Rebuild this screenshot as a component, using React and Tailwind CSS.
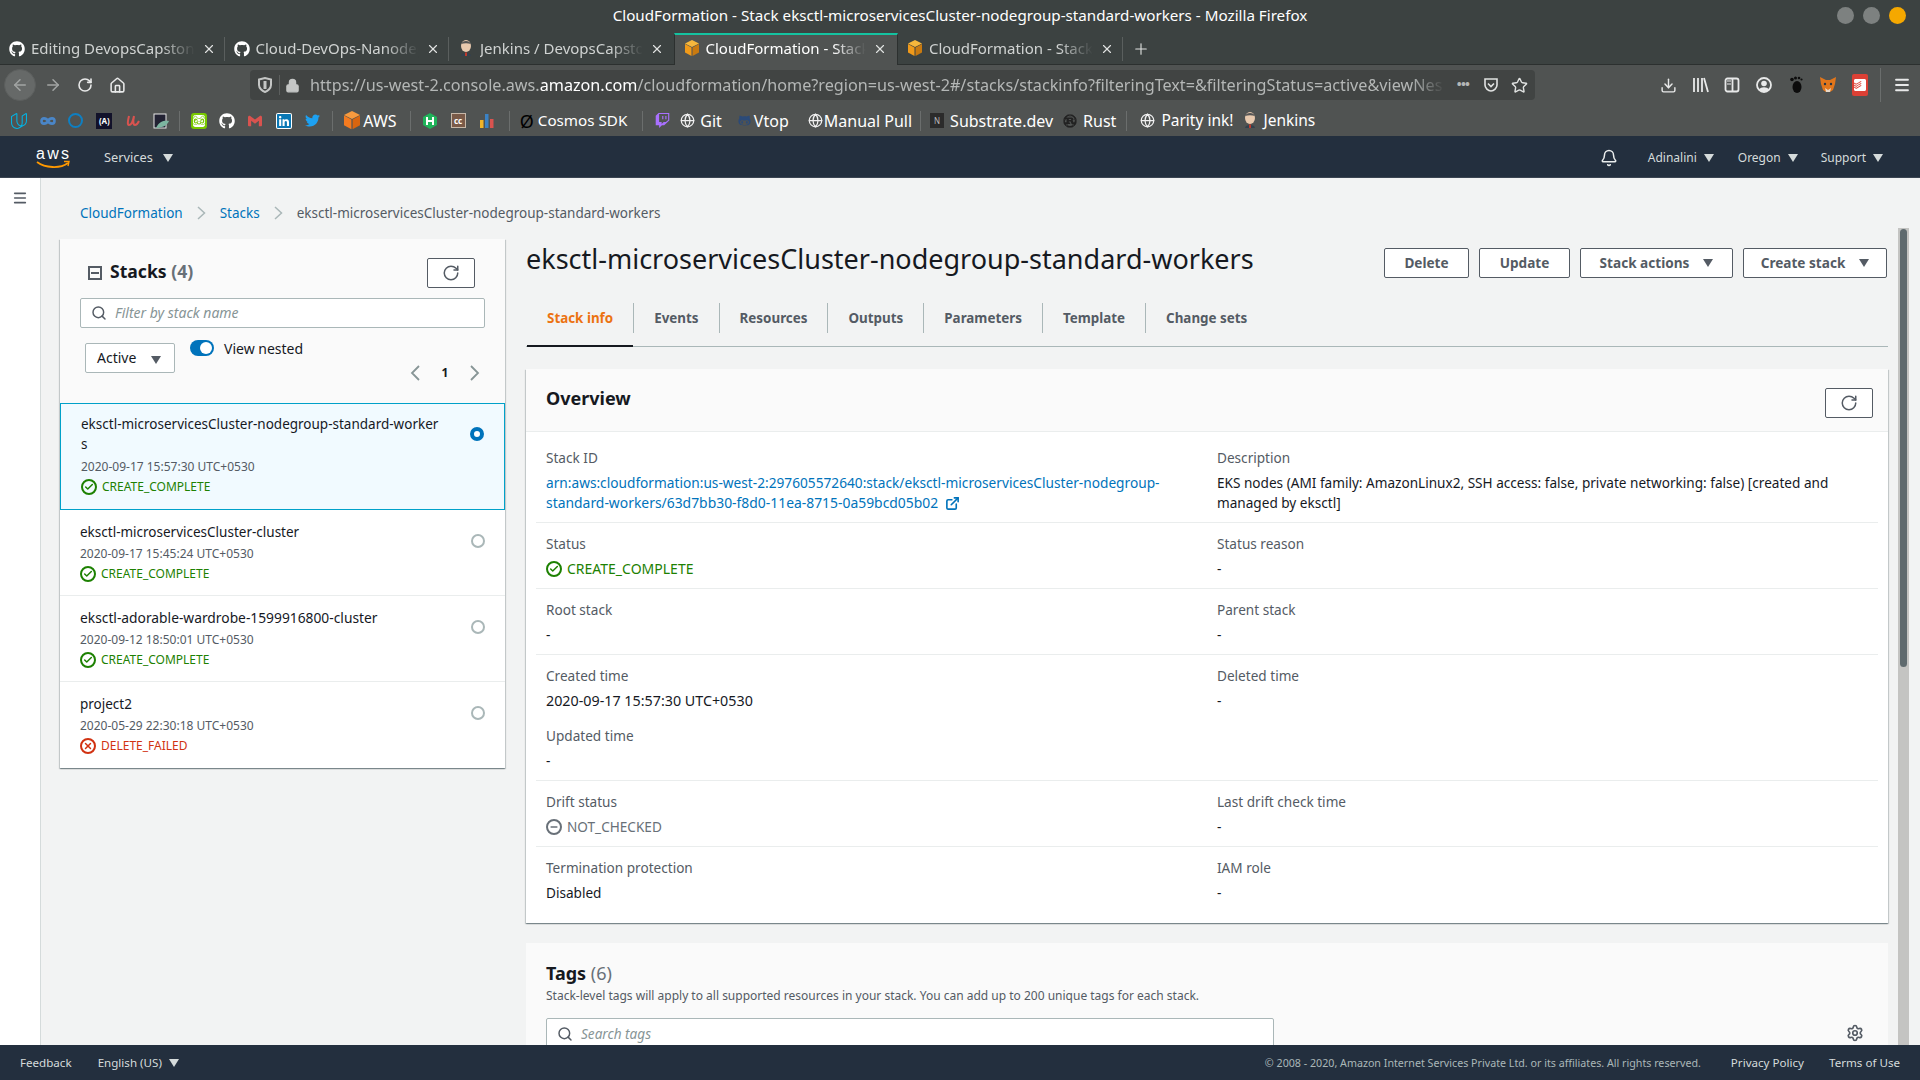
import React from 'react';
import { FaGithub, FaLinkedin, FaTwitter, FaTwitch, FaGithubAlt } from 'react-icons/fa';
import { SiUdacity, SiDuolingo, SiGmail, SiTodoist, SiRust } from 'react-icons/si';
import { X, Plus, ArrowLeft, ArrowRight, RotateCw, Home, Lock, Star, Download, Globe, Menu, Bell, Search, Settings, ExternalLink, Check, Minus } from 'lucide-react';

const Tri = ({ c = 'border-t-[#d5dbdb]' }) => (
  <span className={`inline-block w-0 h-0 border-l-[5px] border-r-[5px] border-t-[8px] border-l-transparent border-r-transparent ${c}`} />
);

const Cube = ({ s = 14, top = '#f6b73c', l = '#f09a1a', r = '#c97a10' }) => (
  <svg width={s} height={s * 1.15} viewBox="0 0 14 16">
    <path d="M7 0 14 3.5 7 7 0 3.5Z" fill={top} />
    <path d="M0 4 6.5 7.5V16L0 12.5Z" fill={l} />
    <path d="M14 4 7.5 7.5V16L14 12.5Z" fill={r} />
  </svg>
);

const JenkinsFace = () => (
  <svg width="14" height="17" viewBox="0 0 14 17">
    <ellipse cx="7" cy="6" rx="5" ry="6" fill="#e8c9ae" />
    <path d="M2 4C3 0 11 0 12 4 9 3 5 3 2 4Z" fill="#555" />
    <path d="M2 16C2 12 12 12 12 16Z" fill="#33414f" />
    <path d="M6 12.500 8 12.500 8 16 6 16Z" fill="#c0392b" />
  </svg>
);

const tabs = [
  { t: 'Editing DevopsCapstone', i: <FaGithub size={16} className="text-white" /> },
  { t: 'Cloud-DevOps-Nanodegree', i: <FaGithub size={16} className="text-white" /> },
  { t: 'Jenkins / DevopsCapstone', i: <JenkinsFace /> },
  { t: 'CloudFormation - Stack', i: <Cube />, active: true },
  { t: 'CloudFormation - Stack', i: <Cube /> },
];

function TabBar() {
  return (
    <div className="h-[32px] flex items-stretch bg-[#3c4241] border-b border-[#2c302f] text-[15px]">
      {tabs.map((tb, i) => (
        <div key={i} className={`w-[224.5px] shrink-0 flex items-center pl-[9px] pr-[10px] ${tb.active ? 'bg-[#505352] border-t-2 border-[#14c2a0] border-x border-x-[#2c302f] h-[32px] pb-[3px]' : ''}`}>
          <span className="w-[16px] flex justify-center shrink-0">{tb.i}</span>
          <span className={`ml-[6px] flex-1 overflow-hidden whitespace-nowrap [mask-image:linear-gradient(90deg,#000_78%,transparent_98%)] ${tb.active ? 'text-white' : 'text-[#d0d3d2]'}`}>{tb.t}</span>
          <X size={14} className="text-[#e0e2e1] shrink-0 ml-1" />
          {!tb.active && i !== 2 && <span className="ml-[8px] -mr-[10px] w-px h-[24px] bg-[#5a5f5e]" />}
        </div>
      ))}
      <div className="flex items-center">
        <span className="w-[36px] flex justify-center"><Plus size={18} strokeWidth={1.5} className="text-[#e0e2e1]" /></span>
      </div>
    </div>
  );
}

function Toolbar() {
  return (
    <div className="h-[40px] bg-[#505352] flex items-center text-[#e8e9e9]">
      <span className="ml-[4px] w-[32px] h-[32px] rounded-full bg-[#666968] border border-[#5c5f5e] flex items-center justify-center"><ArrowLeft size={18} className="text-[#a2a5a4]" /></span>
      <span className="w-[34px] flex justify-center"><ArrowRight size={18} className="text-[#a2a5a4]" /></span>
      <span className="w-[30px] flex justify-center"><RotateCw size={16} strokeWidth={2.4} /></span>
      <span className="w-[34px] flex justify-center"><Home size={17} strokeWidth={2.2} /></span>
      <div className="ml-[116px] w-[1285px] h-[30px] bg-[#414443] rounded-[4px] flex items-center text-[16.200px] text-[#b4b7b6]">
        <svg className="ml-[8px]" width="14" height="16" viewBox="0 0 14 16" fill="none" stroke="#c4c6c5" strokeWidth="2"><path d="M1 2.500 7 1 13 2.500V8C13 11 10 14 7 15 4 14 1 11 1 8Z" /><path d="M7 4V12" strokeWidth="3" /></svg>
        <span className="ml-[7px] w-px h-[20px] bg-[#5c5f5e]" />
        <Lock size={15} fill="#c4c6c5" className="ml-[5px] text-[#c4c6c5] shrink-0" />
        <div className="ml-[10px] w-[1135px] overflow-hidden whitespace-nowrap [mask-image:linear-gradient(90deg,#000_97%,transparent)]">
          https://us-west-2.console.aws.<span className="text-white">amazon.com</span>/cloudformation/home?region=us-west-2#/stacks/stackinfo?filteringText=&filteringStatus=active&viewNes
        </div>
        <span className="ml-[9px] w-[18px] text-center text-[13px] font-bold tracking-tighter">•••</span>
        <svg className="ml-[11px]" width="16" height="16" viewBox="0 0 16 16" fill="none" stroke="#e0e2e1" strokeWidth="1.600"><path d="M2 2H14V8C14 11 11 14 8 14 5 14 2 11 2 8Z" /><path d="M5 6.500 8 9.500 11 6.500" /></svg>
        <Star size={17} className="ml-[12px] text-[#e0e2e1]" />
      </div>
      <div className="flex items-center ml-[117px]">
        <span className="w-[32px] flex justify-center"><Download size={17} /></span>
        <span className="w-[32px] flex justify-center">
          <svg width="17" height="16" viewBox="0 0 17 16" stroke="#e8e9e9" strokeWidth="1.800" fill="none"><path d="M2 1V15M6 1V15M10 1V15M12 1 16 15" /></svg>
        </span>
        <span className="w-[32px] flex justify-center">
          <svg width="16" height="16" viewBox="0 0 16 16" stroke="#e8e9e9" strokeWidth="1.800" fill="none"><rect x="1.500" y="1.500" width="13" height="13" rx="2" /><path d="M8.500 2V14" /><path d="M3 4H7M3 7H7" strokeWidth="1.200" /></svg>
        </span>
        <span className="w-[32px] flex justify-center">
          <svg width="16" height="16" viewBox="0 0 16 16"><circle cx="8" cy="8" r="7" fill="none" stroke="#e8e9e9" strokeWidth="1.800" /><circle cx="8" cy="6.500" r="2.800" fill="#e8e9e9" /><path d="M3 12.500C5 9.500 11 9.500 13 12.500 11 15 5 15 3 12.500Z" fill="#e8e9e9" /></svg>
        </span>
        <span className="w-[32px] flex justify-center">
          <svg width="14" height="18" viewBox="0 0 14 18" fill="#0c0c0c"><ellipse cx="8" cy="11" rx="4.500" ry="6" /><circle cx="3" cy="3.500" r="1.800" /><circle cx="6.500" cy="2" r="1.500" /><circle cx="10" cy="2" r="1.300" /><circle cx="12.500" cy="3.500" r="1.100" /></svg>
        </span>
        <span className="w-[32px] flex justify-center">
          <svg width="18" height="18" viewBox="0 0 18 18"><path d="M1 1 7 4H11L17 1 16 8 14 14 11 16H7L4 14 2 8Z" fill="#e2761b" /><path d="M6 12 9 14 12 12 11 16H7Z" fill="#e8d8c8" /><circle cx="6" cy="8" r="1.200" fill="#233447" /><circle cx="12" cy="8" r="1.200" fill="#233447" /></svg>
        </span>
        <span className="w-[32px] flex justify-center"><span className="w-[16px] h-[22px] bg-[#db4035] rounded-[2px] flex items-center justify-center"><SiTodoist size={12} className="text-white" /></span></span>
        <span className="ml-[4px] w-px h-[34px] bg-[#6b6e6d]" />
        <span className="ml-[11px] w-[20px] flex justify-center"><Menu size={18} strokeWidth={2.400} /></span>
      </div>
    </div>
  );
}

const BmSep = ({ ml = 'ml-[9px]' }) => <span className={`${ml} w-px h-[20px] bg-[#6b6e6d] shrink-0`} />;
const BmI = ({ children }) => <span className="w-[28.400px] h-[20px] shrink-0 flex items-center justify-center">{children}</span>;

function Bookmarks() {
  const G = <Globe size={15} className="text-[#f0f0f0]" />;
  return (
    <div className="h-[31px] bg-[#505352] flex items-center text-white text-[16px] whitespace-nowrap pl-[5px]">
      <BmI><SiUdacity size={16} className="text-[#02b3e4]" /></BmI>
      <BmI><svg width="16" height="10" viewBox="0 0 16 10" fill="none" stroke="#4a86c8" strokeWidth="2.600"><path d="M8 5C6 1.500 1.500 1.500 1.500 5S6 8.500 8 5C10 1.500 14.500 1.500 14.500 5S10 8.500 8 5Z" /></svg></BmI>
      <BmI><span className="block w-[15px] h-[15px] rounded-full border-[2.500px] border-[#0e7fc2]" /></BmI>
      <BmI><span className="w-[16px] h-[16px] bg-[#12122a] flex items-center justify-center text-[8px] leading-none text-white font-bold">(A)</span></BmI>
      <BmI><svg width="14" height="12" viewBox="0 0 14 12" fill="none" stroke="#d9534f" strokeWidth="2"><path d="M3 1C2 5 1 10 3 10 5 10 7 6 8 1 7 6 7 10 9 10 11 10 12 8 13 6" /></svg></BmI>
      <BmI><svg width="16" height="16" viewBox="0 0 16 16"><rect x="1" y="1" width="12" height="14" fill="#223" stroke="#e8e8e8" /><path d="M3 15C6 8 12 7 16 8 14 13 8 15 3 15Z" fill="#7cb5a0" /></svg></BmI>
      <BmSep ml="ml-[4px]" />
      <span className="ml-[4px]" />
      <BmI><span className="w-[16px] h-[16px] rounded-[3px] bg-[#78c800] flex items-center justify-center"><SiDuolingo size={12} className="text-white" /></span></BmI>
      <BmI><FaGithub size={16} className="text-white" /></BmI>
      <BmI><SiGmail size={14} className="text-[#d9534f]" /></BmI>
      <BmI><FaLinkedin size={16} className="text-[#0a78b5] bg-white rounded-[2px]" /></BmI>
      <BmI><FaTwitter size={15} className="text-[#1da1f2]" /></BmI>
      <BmSep ml="ml-[6px]" />
      <span className="ml-[11px] w-[16px] flex justify-center"><Cube s={16} top="#f79a3e" l="#f47b20" r="#d9650f" /></span>
      <span className="ml-[3px]">AWS</span>
      <BmSep ml="ml-[13px]" />
      <span className="ml-[5px]" />
      <BmI><svg width="14" height="16" viewBox="0 0 14 16"><path d="M7 0 14 4V12L7 16 0 12V4Z" fill="#1fb35a" /><path d="M4 4V12M10 4V12M4 8H10" stroke="#fff" strokeWidth="2" /></svg></BmI>
      <BmI><span className="w-[15px] h-[15px] bg-[#7a5a48] text-white text-[8px] font-bold flex items-center justify-center border border-[#c8b8a8]">cc</span></BmI>
      <BmI><svg width="14" height="14" viewBox="0 0 14 14"><rect y="6" width="3.500" height="8" fill="#f0b429" /><rect x="5" y="0" width="3.500" height="14" fill="#3b82c4" /><rect x="10" y="5" width="3.500" height="9" fill="#d9534f" /></svg></BmI>
      <BmSep ml="ml-[8px]" />
      <span className="ml-[10px] text-[18px] text-black leading-none">Ø</span>
      <span className="ml-[4px] text-[15.200px]">Cosmos SDK</span>
      <BmSep ml="ml-[15px]" />
      <span className="ml-[11px] w-[16px] flex justify-center"><FaTwitch size={15} className="text-[#a970ff]" /></span>
      <span className="ml-[10px]">{G}</span>
      <span className="ml-[5px]">Git</span>
      <span className="ml-[16px] w-[14px] flex justify-center"><FaGithubAlt size={13} className="text-[#2b4a78]" /></span>
      <span className="ml-[2px]">Vtop</span>
      <span className="ml-[19px]">{G}</span>
      <span className="ml-[1px]">Manual Pull</span>
      <BmSep ml="ml-[8px]" />
      <span className="ml-[9px] w-[14px] h-[15px] bg-[#2b2b2b] flex items-center justify-center text-[8px] text-[#bbb]">N</span>
      <span className="ml-[6px]">Substrate.dev</span>
      <span className="ml-[10px]"><SiRust size={14} className="text-[#222]" /></span>
      <span className="ml-[6px]">Rust</span>
      <BmSep ml="ml-[10px]" />
      <span className="ml-[13px]">{G}</span>
      <span className="ml-[6px] text-[15.500px]">Parity ink!</span>
      <span className="ml-[10px]"><JenkinsFace /></span>
      <span className="ml-[6px] text-[15.500px]">Jenkins</span>
    </div>
  );
}

function AwsNav() {
  const Item = ({ t, cls }) => (
    <span className={`flex items-center gap-[7px] ${cls}`}>{t}<Tri /></span>
  );
  return (
    <div className="h-[42px] bg-[#232f3e] border-b border-[#3b4552] flex items-center pt-[2px] text-[12px] text-[#d5dbdb]">
      <svg className="ml-[36px] shrink-0" width="34" height="24" viewBox="0 0 34 24">
        <text x="0" y="13" fontSize="16" fill="#fff" fontFamily="Liberation Sans" textLength="33">aws</text>
        <path d="M1 16C9 22 24 23 32 17" fill="none" stroke="#f90" strokeWidth="1.800" />
        <path d="M28 15.500 33 15.500 32 20" fill="none" stroke="#f90" strokeWidth="1.400" />
      </svg>
      <Item t="Services" cls="ml-[34px] text-[12.800px] gap-[10px]" />
      <Bell size={18} className="ml-auto text-[#eaeded]" />
      <Item t="Adinalini" cls="ml-[30px]" />
      <Item t="Oregon" cls="ml-[24px]" />
      <Item t="Support" cls="ml-[23px] mr-[37px]" />
    </div>
  );
}

const OutBtn = ({ children, cls = '' }) => (
  <button className={`h-[30px] border border-[#545b64] rounded-[2px] bg-white flex items-center justify-center font-bold text-[#545b64] text-[13.600px] ${cls}`}>{children}</button>
);

const RefreshBtn = ({ cls = '' }) => (
  <button className={`h-[30px] border border-[#545b64] rounded-[2px] bg-white flex items-center justify-center ${cls}`}>
    <RotateCw size={18} strokeWidth={2} className="text-[#545b64]" />
  </button>
);

const StatusOk = ({ size = 'text-[12px]' }) => (
  <span className={`flex items-center gap-[5px] text-[#1d8102] ${size}`}>
    <span className="w-[16px] h-[16px] rounded-full border-2 border-[#1d8102] flex items-center justify-center"><Check size={10} strokeWidth={3.500} /></span>
    CREATE_COMPLETE
  </span>
);

const StatusFail = () => (
  <span className="flex items-center gap-[5px] text-[#d13212] text-[12px]">
    <span className="w-[16px] h-[16px] rounded-full border-2 border-[#d13212] flex items-center justify-center"><X size={10} strokeWidth={3.500} /></span>
    DELETE_FAILED
  </span>
);

const stacks = [
  { n: 'eksctl-microservicesCluster-cluster', z: 'text-[13.500px]', d: '2020-09-17 15:45:24 UTC+0530', s: <StatusOk /> },
  { n: 'eksctl-adorable-wardrobe-1599916800-cluster', z: 'text-[13.800px]', d: '2020-09-12 18:50:01 UTC+0530', s: <StatusOk /> },
  { n: 'project2', z: 'text-[13.500px]', d: '2020-05-29 22:30:18 UTC+0530', s: <StatusFail /> },
];

function StacksPanel() {
  return (
    <div className="w-[445px] h-[529px] shrink-0 bg-white shadow-[0_1px_1px_0_rgba(0,28,36,0.3),1px_1px_1px_0_rgba(0,28,36,0.15),-1px_1px_1px_0_rgba(0,28,36,0.15)]">
      <div className="h-[164px] bg-[#fafafa] pl-[20px] pr-[20px]">
        <div className="flex items-center pt-[19px] h-[49px]">
          <span className="ml-[8px] w-[14px] h-[14px] border-2 border-[#545b64] flex items-center justify-center"><span className="block w-[8px] h-[2px] bg-[#545b64]" /></span>
          <span className="ml-[8px] -mt-[3px] text-[17.600px] font-bold text-[#16191f]">Stacks <span className="text-[#687078] font-bold">(4)</span></span>
          <RefreshBtn cls="ml-auto mr-[10px] w-[48px]" />
        </div>
        <div className="mt-[10px] h-[30px] w-[405px] border border-[#aab7b8] rounded-[2px] bg-white flex items-center pl-[10px]">
          <Search size={16} strokeWidth={2.200} className="text-[#545b64]" />
          <span className="ml-[8px] italic text-[14px] -mt-[1px] text-[#879596]">Filter by stack name</span>
        </div>
        <div className="flex mt-[12px] pl-[5px]">
          <div className="mt-[3px] w-[90px] h-[30px] border border-[#aab7b8] rounded-[2px] bg-white flex items-center pl-[11px] text-[14px] text-[#16191f]">
            <span className="-mt-[1px]">Active</span><span className="ml-auto mr-[13px]"><Tri c="border-t-[#545b64]" /></span>
          </div>
          <div className="ml-[15px] flex flex-col flex-1">
            <div className="flex items-center h-[16px]">
              <span className="w-[24px] h-[16px] rounded-full bg-[#0073bb] flex items-center justify-end pr-[2px]"><span className="w-[12px] h-[12px] rounded-full bg-white" /></span>
              <span className="ml-[10px] text-[14px] text-[#16191f]">View nested</span>
            </div>
            <div className="mt-[8px] flex items-center justify-end gap-[20px] pr-[5px] text-[#16191f] text-[12px] font-bold">
              <svg width="10" height="16" viewBox="0 0 10 16" fill="none" stroke="#879596" strokeWidth="1.800"><path d="M9 1 2 8 9 15" /></svg>
              <span className="w-[10px] text-center">1</span>
              <svg width="10" height="16" viewBox="0 0 10 16" fill="none" stroke="#879596" strokeWidth="1.800"><path d="M1 1 8 8 1 15" /></svg>
            </div>
          </div>
        </div>
      </div>
      <div className="h-[107px] bg-[#f1faff] border border-[#00a1c9] pl-[20px] pr-[20px] pt-[10px] flex">
        <div className="w-[360px]">
          <div className="text-[13.500px] leading-[20px] text-[#16191f] break-all">eksctl-microservicesCluster-nodegroup-standard-workers</div>
          <div className="mt-[5px] text-[12px] leading-[16px] text-[#545b64]">2020-09-17 15:57:30 UTC+0530</div>
          <div className="mt-[3px]"><StatusOk /></div>
        </div>
        <span className="ml-[29px] mt-[13px] w-[14px] h-[14px] rounded-full border-[4px] border-[#0073bb] bg-white shrink-0" />
      </div>
      {stacks.map((s, i) => (
        <div key={i} className={`h-[86px] pl-[20px] pr-[20px] pt-[12px] flex ${i < 2 ? 'border-b border-[#eaeded]' : ''}`}>
          <div className="w-[360px]">
            <div className={`${s.z} leading-[20px] text-[#16191f]`}>{s.n}</div>
            <div className="mt-[4px] text-[12px] leading-[16px] text-[#545b64]">{s.d}</div>
            <div className="mt-[3px]">{s.s}</div>
          </div>
          <span className="ml-[31px] mt-[12px] w-[14px] h-[14px] rounded-full border-2 border-[#aab7b8] shrink-0" />
        </div>
      ))}
    </div>
  );
}

const Field = ({ label, children }) => (
  <div>
    <div className="text-[13.600px] leading-[20px] text-[#545b64]">{label}</div>
    <div className="mt-[5px] text-[13.600px] leading-[20px] text-[#16191f]">{children}</div>
  </div>
);

const Row = ({ left, right, h, pad = 'pt-[11px]', border = true }) => (
  <div className={`mx-[10px] pl-[10px] ${pad} grid grid-cols-[671px_1fr] ${border ? 'border-b border-[#eaeded]' : ''}`} style={{ height: h }}>
    <div>{left}</div>
    <div>{right}</div>
  </div>
);

function Details() {
  const tabNames = ['Stack info', 'Events', 'Resources', 'Outputs', 'Parameters', 'Template', 'Change sets'];
  return (
    <div className="w-[1362px] shrink-0">
      <div className="h-[58px] flex items-start pt-[9px]">
        <h1 className="text-[27px] leading-[36px] -mt-[7px] text-[#16191f] font-normal">eksctl-microservicesCluster-nodegroup-standard-workers</h1>
        <div className="ml-auto flex gap-[10px] pr-[1px]">
          <OutBtn cls="w-[85px]">Delete</OutBtn>
          <OutBtn cls="w-[91px]">Update</OutBtn>
          <OutBtn cls="w-[153px] gap-[14px]">Stack actions<Tri c="border-t-[#545b64]" /></OutBtn>
          <OutBtn cls="w-[144px] gap-[14px]">Create stack<Tri c="border-t-[#545b64]" /></OutBtn>
        </div>
      </div>
      <div className="h-[50px] border-b-[1px] border-[#aab7b8] flex items-start pt-[6px]">
        {tabNames.map((t, i) => (
          <div key={t} className={`relative h-[30px] flex items-center px-[20px] pt-[1px] text-[13.400px] font-bold ${i === 0 ? 'text-[#ec7211] ml-px' : 'text-[#545b64]'} ${i < 6 ? 'border-r border-[#aab7b8]' : ''}`}>
            {t}
            {i === 0 && <span className="absolute left-0 right-0 top-[42px] h-[2px] bg-[#16191f]" />}
          </div>
        ))}
      </div>
      <div className="mt-[22px] h-[554px] bg-white shadow-[0_1px_1px_0_rgba(0,28,36,0.3),1px_1px_1px_0_rgba(0,28,36,0.15),-1px_1px_1px_0_rgba(0,28,36,0.15)]">
        <div className="h-[63px] bg-[#fafafa] border-b border-[#eaeded] flex items-start pl-[20px] pr-[15px] pt-[19px]">
          <h2 className="text-[18px] leading-[22px] -mt-[1px] font-bold text-[#16191f]">Overview</h2>
          <RefreshBtn cls="ml-auto w-[48px]" />
        </div>
        <Row h="91px" pad="pt-[16px]" left={
          <Field label="Stack ID">
            <span className="text-[#0073bb] text-[13.700px]">arn:aws:cloudformation:us-west-2:297605572640:stack/eksctl-microservicesCluster-nodegroup-<br /><span className="text-[13.900px]">standard-workers/63d7bb30-f8d0-11ea-8715-0a59bcd05b02</span> <ExternalLink size={15} strokeWidth={2.600} className="inline ml-[3px] -mt-[2px]" /></span>
          </Field>
        } right={
          <Field label="Description">EKS nodes (AMI family: AmazonLinux2, SSH access: false, private networking: false) [created and<br />managed by eksctl]</Field>
        } />
        <Row h="66px" left={<Field label="Status"><StatusOk size="text-[14px]" /></Field>} right={<Field label="Status reason">-</Field>} />
        <Row h="66px" left={<Field label="Root stack">-</Field>} right={<Field label="Parent stack">-</Field>} />
        <Row h="126px" left={
          <div>
            <Field label="Created time"><span className="text-[14.300px]">2020-09-17 15:57:30 UTC+0530</span></Field>
            <div className="mt-[15px]"><Field label="Updated time">-</Field></div>
          </div>
        } right={<Field label="Deleted time">-</Field>} />
        <Row h="66px" left={
          <Field label="Drift status">
            <span className="flex items-center gap-[5px] text-[#687078]">
              <span className="w-[16px] h-[16px] rounded-full border-2 border-[#687078] flex items-center justify-center"><Minus size={10} strokeWidth={3.500} /></span>
              NOT_CHECKED
            </span>
          </Field>
        } right={<Field label="Last drift check time">-</Field>} />
        <Row h="76px" border={false} left={<Field label="Termination protection">Disabled</Field>} right={<Field label="IAM role">-</Field>} />
      </div>
      <div className="mt-[20px] h-[120px] bg-[#fafafa] pl-[20px] pr-[24px] pt-[18px]">
        <div className="text-[18px] leading-[24px] font-bold text-[#16191f]">Tags <span className="font-normal text-[#687078]">(6)</span></div>
        <div className="text-[12px] leading-[16px] text-[#545b64] mt-[3px]">Stack-level tags will apply to all supported resources in your stack. You can add up to 200 unique tags for each stack.</div>
        <div className="mt-[14px] flex items-start">
          <div className="w-[728px] h-[40px] border border-[#aab7b8] rounded-[2px] bg-white flex items-start pl-[10px] pt-[5px]">
            <Search size={16} strokeWidth={2.200} className="text-[#545b64] mt-[2px]" />
            <span className="ml-[8px] italic text-[13.600px] text-[#879596]">Search tags</span>
          </div>
          <Settings size={18} strokeWidth={2.200} className="ml-auto mt-[6px] text-[#545b64]" />
        </div>
      </div>
    </div>
  );
}

function Footer() {
  return (
    <div className="h-[35px] shrink-0 bg-[#232f3e] flex items-center pl-[20px] pr-[20px] pt-[1px] text-[11.600px] text-[#d5dbdb] relative z-10">
      <span>Feedback</span>
      <span className="ml-[26px] flex items-center gap-[7px]">English (US)<Tri /></span>
      <span className="ml-auto text-[10.700px] text-[#aab7b8]">© 2008 - 2020, Amazon Internet Services Private Ltd. or its affiliates. All rights reserved.</span>
      <span className="ml-[30px]">Privacy Policy</span>
      <span className="ml-[25px]">Terms of Use</span>
    </div>
  );
}

export default function App() {
  return (
    <div className="w-[1920px] h-[1080px] overflow-hidden flex flex-col font-['Noto_Sans',sans-serif] bg-[#f2f3f3]">
      <div className="h-[33px] shrink-0 bg-[#3c4241] flex items-center justify-center pb-[2px] relative text-[15.200px] text-white">
        CloudFormation - Stack eksctl-microservicesCluster-nodegroup-standard-workers - Mozilla Firefox
        <div className="absolute right-[14px] top-[7px] flex gap-[9px]">
          <span className="w-[17px] h-[17px] rounded-full bg-[#7d8180]" />
          <span className="w-[17px] h-[17px] rounded-full bg-[#7d8180]" />
          <span className="w-[17px] h-[17px] rounded-full bg-[#f5a800]" />
        </div>
      </div>
      <TabBar />
      <Toolbar />
      <Bookmarks />
      <AwsNav />
      <div className="flex-1 flex min-h-0 overflow-hidden">
        <div className="w-[41px] shrink-0 bg-white border-r border-[#d5dbdb] pt-[12px] pl-[12px]">
          <Menu size={16} strokeWidth={2.400} className="text-[#545b64]" />
        </div>
        <div className="w-[1857px] shrink-0 pl-[19px] overflow-hidden">
          <div className="h-[61px] pt-[25px] flex items-start text-[13.500px] leading-[20px] pl-[20px]">
            <span className="text-[#0073bb]">CloudFormation</span>
            <svg className="mx-[14px] mt-[3px]" width="9" height="14" viewBox="0 0 9 14" fill="none" stroke="#aab7b8" strokeWidth="1.500"><path d="M1 1 7.500 7 1 13" /></svg>
            <span className="text-[#0073bb]">Stacks</span>
            <svg className="mx-[14px] mt-[3px]" width="9" height="14" viewBox="0 0 9 14" fill="none" stroke="#aab7b8" strokeWidth="1.500"><path d="M1 1 7.500 7 1 13" /></svg>
            <span className="text-[#545b64]">eksctl-microservicesCluster-nodegroup-standard-workers</span>
          </div>
          <div className="flex gap-[21px]">
            <StacksPanel />
            <Details />
          </div>
        </div>
        <div className="w-[11px] shrink-0 bg-[#c4c4c2] mt-[50px] relative">
          <span className="absolute left-[2px] right-[2px] top-[1px] h-[438px] rounded-full bg-[#5f6a6e]" />
        </div>
      </div>
      <Footer />
    </div>
  );
}
